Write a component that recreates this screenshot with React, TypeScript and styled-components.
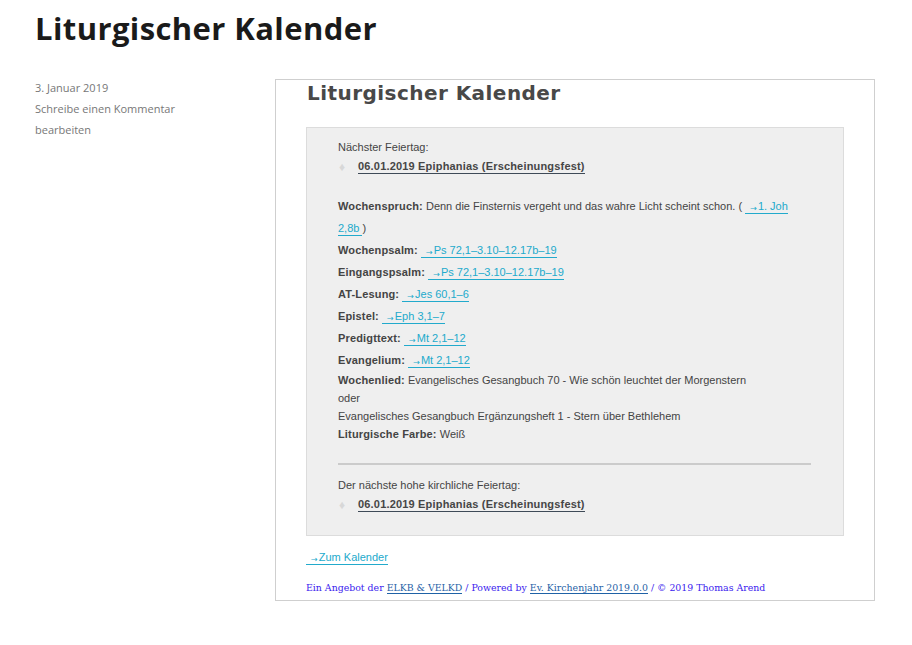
import styled, { createGlobalStyle } from "styled-components";

const GlobalStyle = createGlobalStyle`
  html, body {
    margin: 0;
    padding: 0;
    background: #fff;
  }
`;

const Page = styled.div`
  width: 912px;
  min-height: 645px;
  padding: 0 0 0 35px;
  box-sizing: border-box;
`;

const PageTitle = styled.h1`
  margin: 0;
  padding-top: 8px;
  height: 79px;
  box-sizing: border-box;
  font-family: "Open Sans", sans-serif;
  font-weight: 700;
  font-size: 31px;
  line-height: 40px;
  color: #1a1a1a;
  letter-spacing: 0.4px;
`;

const Body = styled.div`
  display: grid;
  grid-template-columns: 240px 600px;
  align-items: start;
`;

const Meta = styled.div`
  display: flex;
  flex-direction: column;
  margin-top: -2px;
  font-family: "Open Sans", sans-serif;
  font-size: 11px;
  line-height: 21px;
  color: #777;
`;

const Widget = styled.div`
  border: 1px solid #cfcfcf;
  padding: 0 30px;
`;

const WidgetTitle = styled.h2`
  margin: 0 0 0 1px;
  font-family: "DejaVu Sans", sans-serif;
  font-weight: 700;
  font-size: 20px;
  line-height: 26px;
  letter-spacing: 0.45px;
  color: #484848;
  height: 47px;
`;

const Panel = styled.div`
  background: #efefef;
  border: 1px solid #dcdcdc;
  padding: 9px 32px 20px 31px;
  font-family: "Liberation Sans", Arial, sans-serif;
  font-size: 11px;
  color: #444;
`;

const Line = styled.div<{ $h?: number }>`
  line-height: ${(p) => p.$h ?? 20}px;
`;

const Item = styled.div`
  display: flex;
  align-items: center;
  height: 20px;
  &::before {
    content: "\u2666";
    color: #d8d8d8;
    font-size: 12px;
    width: 20px;
    padding-left: 1px;
    box-sizing: border-box;
  }
`;

const FeastLink = styled.a`
  font-weight: 700;
  color: #464646;
  letter-spacing: 0.18px;
  text-decoration: none;
  border-bottom: 1px solid #3e4a57;
  line-height: 13px;
`;

const Readings = styled.div`
  margin-top: 19px;
`;

const Label = styled.b`
  color: #444;
  letter-spacing: 0.15px;
`;

const RefLink = styled.a`
  color: #22aacc;
  text-decoration: none;
  border-bottom: 1px solid #22aacc;
  padding-bottom: 1px;
`;

const Arrow = styled.span`
  font-family: "DejaVu Sans", sans-serif;
  font-size: 8px;
  line-height: 1;
  vertical-align: -1px;
  padding: 0 1px 0 2px;
`;

const Rule = styled.hr`
  margin: 19px 0 10px;
  border: none;
  height: 2px;
  background: #cbcbcb;
`;

const CalendarLine = styled.div`
  margin-top: 11px;
  line-height: 20px;
  font-family: "Liberation Sans", Arial, sans-serif;
  font-size: 11px;
`;

const Footer = styled.div`
  margin-top: 11px;
  line-height: 20px;
  padding-bottom: 2px;
  font-family: "DejaVu Serif", serif;
  font-size: 9.4px;
  color: #3a22ee;
`;

const FooterLink = styled.a`
  color: #1f62a6;
  text-decoration: none;
  border-bottom: 1px solid #1f62a6;
`;

const Ref = ({ children }: { children: string }) => (
  <RefLink href="#">
    {"\u00a0"}
    <Arrow>→</Arrow>
    {children}
  </RefLink>
);

const readings: [string, string][] = [
  ["Wochenpsalm:", "Ps 72,1–3.10–12.17b–19"],
  ["Eingangspsalm:", "Ps 72,1–3.10–12.17b–19"],
  ["AT-Lesung:", "Jes 60,1–6"],
  ["Epistel:", "Eph 3,1–7"],
  ["Predigttext:", "Mt 2,1–12"],
  ["Evangelium:", "Mt 2,1–12"],
];

export default function App() {
  return (
    <Page>
      <GlobalStyle />
      <PageTitle>Liturgischer Kalender</PageTitle>
      <Body>
        <Meta>
          <span>3. Januar 2019</span>
          <span>Schreibe einen Kommentar</span>
          <span>bearbeiten</span>
        </Meta>
        <Widget>
          <WidgetTitle>Liturgischer Kalender</WidgetTitle>
          <Panel>
            <Line>Nächster Feiertag:</Line>
            <Item>
              <FeastLink href="#">06.01.2019 Epiphanias (Erscheinungsfest)</FeastLink>
            </Item>
            <Readings>
              <Line $h={21.5}>
                <Label>Wochenspruch:</Label> Denn die Finsternis vergeht und das wahre Licht scheint
                schon. ( <Ref>1. Joh 2,8b </Ref>)
              </Line>
              {readings.map(([label, ref]) => (
                <Line $h={22} key={label}>
                  <Label>{label}</Label> <Ref>{ref}</Ref>
                </Line>
              ))}
              <Line $h={18}>
                <Label>Wochenlied:</Label> Evangelisches Gesangbuch 70 - Wie schön leuchtet der
                Morgenstern
              </Line>
              <Line $h={18}>oder</Line>
              <Line $h={18}>Evangelisches Gesangbuch Ergänzungsheft 1 - Stern über Bethlehem</Line>
              <Line $h={19}>
                <Label>Liturgische Farbe:</Label> Weiß
              </Line>
            </Readings>
            <Rule />
            <Line>Der nächste hohe kirchliche Feiertag:</Line>
            <Item>
              <FeastLink href="#">06.01.2019 Epiphanias (Erscheinungsfest)</FeastLink>
            </Item>
          </Panel>
          <CalendarLine>
            <Ref>Zum Kalender</Ref>
          </CalendarLine>
          <Footer>
            Ein Angebot der <FooterLink href="#">ELKB &amp; VELKD</FooterLink> / Powered by{" "}
            <FooterLink href="#">Ev. Kirchenjahr 2019.0.0</FooterLink> / © 2019 Thomas Arend
          </Footer>
        </Widget>
      </Body>
    </Page>
  );
}
